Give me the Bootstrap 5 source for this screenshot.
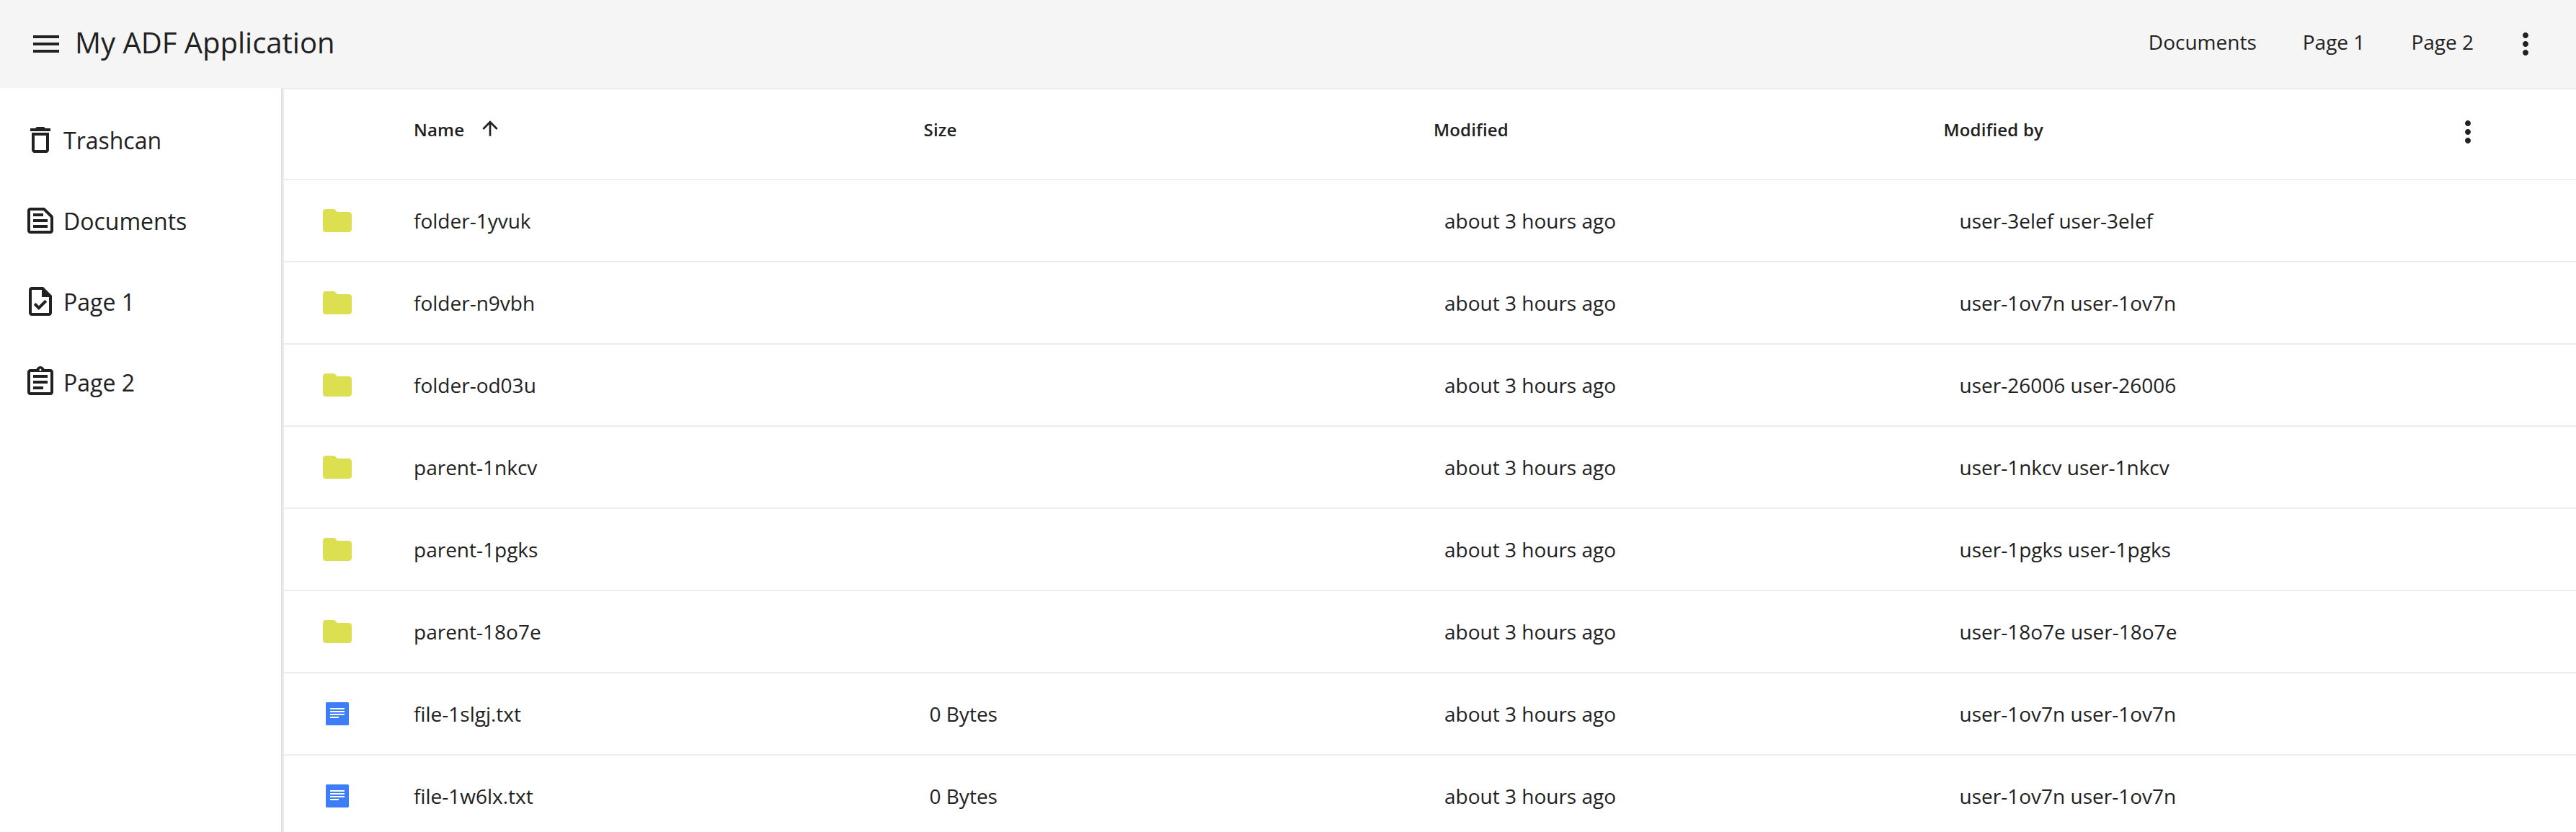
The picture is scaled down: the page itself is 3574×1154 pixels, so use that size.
<!DOCTYPE html>
<html lang="en">
<head>
<meta charset="utf-8">
<title>My ADF Application</title>
<link href="https://cdn.jsdelivr.net/npm/bootstrap@5.3.0/dist/css/bootstrap.min.css" rel="stylesheet">
<style>
body{font-family:"Open Sans",sans-serif;font-size:28px;color:#212121;background:#fff;line-height:38px}
svg{fill:currentColor;flex:none;display:block}
.ic{width:48px;height:48px}
.top-bar{height:122px;background:#f5f5f5;padding:0 46px 0 40px}
.app-title{font-size:40px;line-height:55px;padding-bottom:5px;margin-left:16px}
.top-nav{gap:64px;padding-bottom:6px;margin-right:48px}
.top-nav a,.side-nav a{color:inherit;text-decoration:none}
.app-body{height:1032px}
.side-nav{width:392px;border-right:2px solid #e0e0e0;padding-top:16px;font-size:32px;line-height:43px}
.side-nav a{height:112px;padding-left:32px;gap:8px}
.side-nav span{padding-top:1px}
.doc-list{border:solid #ededed;border-width:2px 0 0 2px;min-width:0}
.list-line{height:114px;border-bottom:2px solid #ededed}
.list-head{height:126px;font-size:24px;line-height:33px;font-weight:600;letter-spacing:.18px}
.list-head>.c{padding-bottom:13px}
.type{width:180px;padding-left:50px}
.c{flex:1 1 0;min-width:0}
.act{width:170px}
.act svg{margin-left:-4px;margin-bottom:6px}
.sort{width:32px;height:32px;margin-left:20px;margin-top:-3px}
.v-size{text-indent:8px}.v-date{text-indent:15px}.v-user{text-indent:22px}
.folder{color:#dbdf50}
</style>
<script src="https://cdn.jsdelivr.net/npm/bootstrap@5.3.0/dist/js/bootstrap.bundle.min.js"></script>
</head>
<body class="overflow-hidden">
<svg class="d-none">
<symbol id="more" viewBox="0 0 24 24"><path d="M12 8c1.100 0 2-.9 2-2s-.9-2-2-2-2 .9-2 2 .9 2 2 2zm0 2c-1.100 0-2 .9-2 2s.9 2 2 2 2-.9 2-2-.9-2-2-2zm0 6c-1.100 0-2 .9-2 2s.9 2 2 2 2-.9 2-2-.9-2-2-2z"/></symbol>
<symbol id="folder" viewBox="0 0 24 24"><path d="M10 4H4c-1.100 0-1.990.9-1.990 2L2 18c0 1.100.9 2 2 2h16c1.100 0 2-.9 2-2V8c0-1.100-.9-2-2-2h-8l-2-2z"/></symbol>
<symbol id="file" viewBox="0 0 24 24"><rect x="4" y="4" width="16" height="16" rx=".8" fill="#3d7df6"/><path fill="#fff" d="M7 8h10v1H7zM7 10h10v1H7zM7 12h10v1H7zM7 14h6v1H7z"/></symbol>
</svg>

<header class="top-bar d-flex align-items-center">
  <svg class="ic" viewBox="0 0 24 24"><path d="M3 18h18v-2H3v2zm0-5h18v-2H3v2zm0-7v2h18V6H3z"/></svg>
  <div class="app-title">My ADF Application</div>
  <nav class="top-nav d-flex ms-auto"><a href="#">Documents</a><a href="#">Page 1</a><a href="#">Page 2</a></nav>
  <svg class="ic"><use href="#more"/></svg>
</header>

<div class="app-body d-flex">
  <nav class="side-nav flex-shrink-0">
    <a href="#" class="d-flex align-items-center"><svg class="ic" viewBox="0 0 24 24"><path fill-rule="evenodd" d="M9.500 3h5l1 1H19v2H5V4h3.500zM6 7h12v12c0 1.100-.9 2-2 2H8c-1.100 0-2-.9-2-2zm2 2v10h8V9z"/></svg><span>Trashcan</span></a>
    <a href="#" class="d-flex align-items-center"><svg class="ic" viewBox="0 0 24 24"><path d="M14.170 5L19 9.830V19H5V5h9.170m0-2H5c-1.100 0-2 .9-2 2v14c0 1.100.9 2 2 2h14c1.100 0 2-.9 2-2V9.830c0-.53-.21-1.040-.59-1.410l-4.830-4.830c-.37-.38-.88-.59-1.410-.59zM7 15h10v2H7v-2zm0-4h10v2H7v-2zm0-4h7v2H7V7z"/></svg><span>Documents</span></a>
    <a href="#" class="d-flex align-items-center"><svg class="ic" viewBox="0 0 24 24"><path d="M14 2H6c-1.100 0-1.990.9-1.990 2L4 20c0 1.100.89 2 1.990 2H18c1.100 0 2-.9 2-2V8l-6-6zm4 18H6V4h7v5h5v11zm-9.180-6.950L7.400 14.460 10.940 18l5.660-5.660-1.410-1.410-4.240 4.240-2.130-2.120z"/></svg><span>Page 1</span></a>
    <a href="#" class="d-flex align-items-center"><svg class="ic" viewBox="0 0 24 24"><path d="M7 15h7v2H7zm0-4h10v2H7zm0-4h10v2H7zm12-4h-4.180C14.400 1.840 13.300 1 12 1c-1.300 0-2.400.84-2.820 2H5c-1.100 0-2 .9-2 2v14c0 1.100.9 2 2 2h14c1.100 0 2-.9 2-2V5c0-1.100-.9-2-2-2zm-7-.25c.41 0 .75.34.75.75s-.34.75-.75.75-.75-.34-.75-.75.34-.75.75-.75zM19 19H5V5h14v14z"/></svg><span>Page 2</span></a>
  </nav>

  <main class="doc-list flex-grow-1 overflow-hidden">
    <div class="list-line list-head d-flex align-items-center">
      <div class="type"></div>
      <div class="c d-flex align-items-center">Name<svg class="sort" viewBox="0 0 24 24"><path d="M4 12l1.410 1.410L11 7.830V20h2V7.830l5.580 5.590L20 12l-8-8-8 8z"/></svg></div>
      <div class="c">Size</div>
      <div class="c">Modified</div>
      <div class="c">Modified by</div>
      <div class="act"><svg class="ic"><use href="#more"/></svg></div>
    </div>
    <div class="list-line d-flex align-items-center"><div class="type"><svg class="ic folder"><use href="#folder"/></svg></div><div class="c">folder-1yvuk</div><div class="c v-size"></div><div class="c v-date">about 3 hours ago</div><div class="c v-user">user-3elef user-3elef</div><div class="act"></div></div>
    <div class="list-line d-flex align-items-center"><div class="type"><svg class="ic folder"><use href="#folder"/></svg></div><div class="c">folder-n9vbh</div><div class="c v-size"></div><div class="c v-date">about 3 hours ago</div><div class="c v-user">user-1ov7n user-1ov7n</div><div class="act"></div></div>
    <div class="list-line d-flex align-items-center"><div class="type"><svg class="ic folder"><use href="#folder"/></svg></div><div class="c">folder-od03u</div><div class="c v-size"></div><div class="c v-date">about 3 hours ago</div><div class="c v-user">user-26006 user-26006</div><div class="act"></div></div>
    <div class="list-line d-flex align-items-center"><div class="type"><svg class="ic folder"><use href="#folder"/></svg></div><div class="c">parent-1nkcv</div><div class="c v-size"></div><div class="c v-date">about 3 hours ago</div><div class="c v-user">user-1nkcv user-1nkcv</div><div class="act"></div></div>
    <div class="list-line d-flex align-items-center"><div class="type"><svg class="ic folder"><use href="#folder"/></svg></div><div class="c">parent-1pgks</div><div class="c v-size"></div><div class="c v-date">about 3 hours ago</div><div class="c v-user">user-1pgks user-1pgks</div><div class="act"></div></div>
    <div class="list-line d-flex align-items-center"><div class="type"><svg class="ic folder"><use href="#folder"/></svg></div><div class="c">parent-18o7e</div><div class="c v-size"></div><div class="c v-date">about 3 hours ago</div><div class="c v-user">user-18o7e user-18o7e</div><div class="act"></div></div>
    <div class="list-line d-flex align-items-center"><div class="type"><svg class="ic"><use href="#file"/></svg></div><div class="c">file-1slgj.txt</div><div class="c v-size">0 Bytes</div><div class="c v-date">about 3 hours ago</div><div class="c v-user">user-1ov7n user-1ov7n</div><div class="act"></div></div>
    <div class="list-line d-flex align-items-center"><div class="type"><svg class="ic"><use href="#file"/></svg></div><div class="c">file-1w6lx.txt</div><div class="c v-size">0 Bytes</div><div class="c v-date">about 3 hours ago</div><div class="c v-user">user-1ov7n user-1ov7n</div><div class="act"></div></div>
  </main>
</div>
</body>
</html>
